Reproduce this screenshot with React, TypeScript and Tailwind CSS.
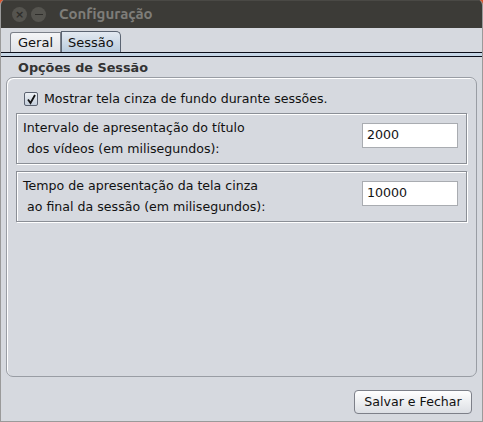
export default function App() {
  return (
    <div className="w-[483px] h-[422px] bg-[#d9552f] font-['DejaVu_Sans',sans-serif]">
      <div className="w-full h-full flex flex-col rounded-t-[5px] overflow-hidden border-x border-b border-[#9a9a9a] bg-[#d6d9df]">
        {/* title bar */}
        <div className="h-[28px] shrink-0 bg-[#3c3b37] border-t border-[#4a4945] flex items-center pl-[11px]">
          <div className="w-[15px] h-[15px] rounded-full bg-[#55544f] flex items-center justify-center text-[#2e2d2a] text-[11px] leading-none font-bold">×</div>
          <div className="w-[15px] h-[15px] rounded-full bg-[#55544f] flex items-center justify-center ml-[4px]">
            <div className="w-[8px] h-[1.5px] bg-[#2e2d2a]" />
          </div>
          <span className="ml-[13px] text-[15px] font-bold text-[#7e7d79] font-['Ubuntu','DejaVu_Sans',sans-serif]">Configuração</span>
        </div>

        {/* tabs */}
        <div className="flex items-end pl-[9px] pt-[3px] h-[24px] shrink-0">
          <div className="h-[20px] px-[7px] border border-b-0 border-[#7a7f88] rounded-tl-[3px] bg-gradient-to-b from-[#f4f5f7] to-[#dfe2e7] text-[13px] text-[#111] leading-[19px]">Geral</div>
          <div className="h-[21px] px-[6px] border border-b-0 border-[#5b6472] rounded-tr-[5px] bg-gradient-to-b from-[#e3e9f1] to-[#b9cbdd] text-[13px] text-[#111] leading-[21px]">Sessão</div>
        </div>
        <div className="h-[5px] shrink-0 border-y border-[#0c0f1a] bg-[#c6d6e6]" />

        {/* tab content */}
        <div className="flex-1 flex flex-col px-[5px] pt-[3px]">
          <div className="pl-[12px] text-[12.8px] font-bold text-[#333] leading-[16px] h-[17px]">Opções de Sessão</div>
          <div className="h-[300px] shrink-0 rounded-[7px] border border-[#999da4] shadow-[inset_1px_1px_0_#fff] px-[9px] pt-[12px]">
            <label className="flex items-center gap-[6px] pl-[8px] h-[18px]">
              <span className="w-[14px] h-[14px] border border-[#5b6270] rounded-[2px] bg-gradient-to-b from-[#eef1f5] to-[#c4cedb] flex items-center justify-center">
                <svg width="11" height="11" viewBox="0 0 11 11"><path d="M2 5.5 L4.5 9 L9 1" fill="none" stroke="#111" strokeWidth="1.8" /></svg>
              </span>
              <span className="text-[12.6px] text-[#111]">Mostrar tela cinza de fundo durante sessões.</span>
            </label>

            <div className="mt-[5px] flex flex-col gap-[7px]">
              <div className="h-[51px] border border-[#8b8f96] shadow-[inset_1px_1px_0_#fff,1px_1px_0_#fff] flex items-start justify-between pl-[6px] pr-[8px]">
                <div className="text-[12.6px] text-[#111] leading-[21px] pt-[3px]">
                  <div>Intervalo de apresentação do título</div>
                  <div>&nbsp;dos vídeos (em milisegundos):</div>
                </div>
                <div className="mt-[9px] w-[96px] h-[25px] bg-white border border-[#a9acb1] pl-[4px] text-[12.6px] text-[#111] leading-[22px]">2000</div>
              </div>
              <div className="h-[51px] border border-[#8b8f96] shadow-[inset_1px_1px_0_#fff,1px_1px_0_#fff] flex items-start justify-between pl-[6px] pr-[8px]">
                <div className="text-[12.6px] text-[#111] leading-[21px] pt-[3px]">
                  <div>Tempo de apresentação da tela cinza</div>
                  <div>&nbsp;ao final da sessão (em milisegundos):</div>
                </div>
                <div className="mt-[9px] w-[96px] h-[25px] bg-white border border-[#a9acb1] pl-[4px] text-[12.6px] text-[#111] leading-[22px]">10000</div>
              </div>
            </div>
          </div>

          <div className="flex justify-end pr-[5px] pt-[13px]">
            <button className="w-[118px] h-[24px] rounded-[4px] border border-[#7d8089] bg-gradient-to-b from-[#ffffff] to-[#dcdfe4] text-[12.6px] text-[#111] leading-[20px]">Salvar e Fechar</button>
          </div>
        </div>
      </div>
    </div>
  );
}
